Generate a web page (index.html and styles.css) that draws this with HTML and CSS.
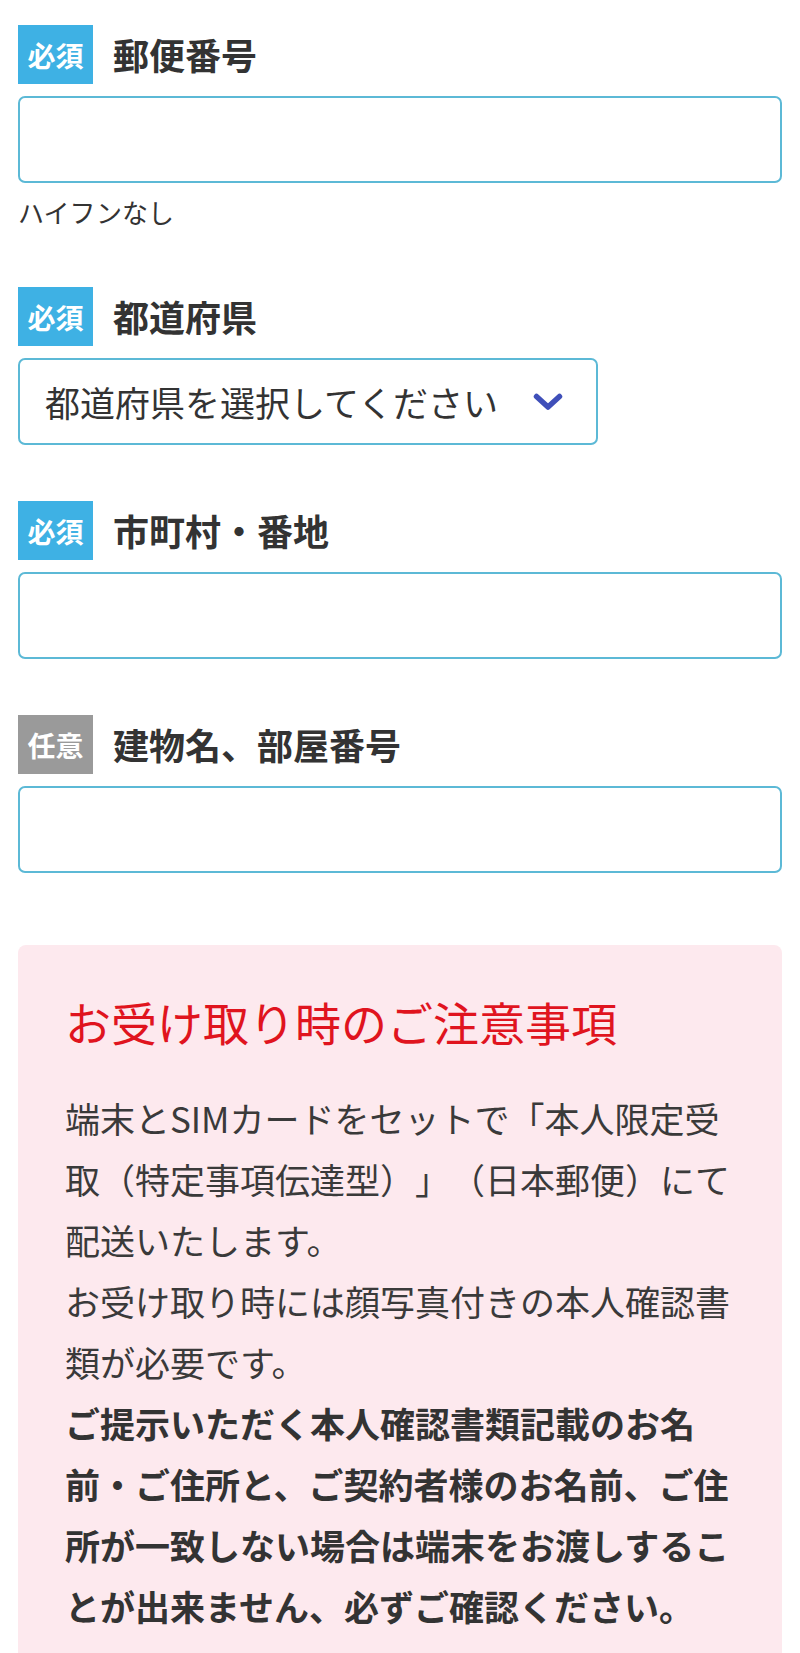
FILE: index.html
```html
<!DOCTYPE html>
<html lang="ja">
  <head>
    <meta charset="utf-8">
    <title>お届け先住所</title>
    <link rel="stylesheet" href="styles.css">
  </head>
  <body>
    <form class="address_form">
      <div class="field">
        <div class="field_head">
          <span class="badge">必須</span>
          <label class="field_label" for="zip">郵便番号</label>
        </div>
        <input class="text_input" type="text" id="zip" name="zip">
        <p class="hint">ハイフンなし</p>
      </div>

      <div class="field">
        <div class="field_head">
          <span class="badge">必須</span>
          <label class="field_label" for="pref">都道府県</label>
        </div>
        <div class="select_wrap">
          <select class="select_input" id="pref" name="pref">
            <option>都道府県を選択してください</option>
          </select>
          <svg class="select_arrow" width="30" height="18" viewBox="0 0 30 18">
            <path d="M3.5 3.5 L15 14 L26.5 3.5" fill="none" stroke="#3f4fb9" stroke-width="5.5" stroke-linecap="round" stroke-linejoin="round"/>
          </svg>
        </div>
      </div>

      <div class="field">
        <div class="field_head">
          <span class="badge">必須</span>
          <label class="field_label" for="city">市町村・番地</label>
        </div>
        <input class="text_input" type="text" id="city" name="city">
      </div>

      <div class="field">
        <div class="field_head">
          <span class="badge badge_optional">任意</span>
          <label class="field_label" for="building">建物名、部屋番号</label>
        </div>
        <input class="text_input" type="text" id="building" name="building">
      </div>
    </form>

    <div class="notice">
      <h2 class="notice_title">お受け取り時のご注意事項</h2>
      <p class="notice_text">端末とSIMカードをセットで「本人限定受取（特定事項伝達型）」（日本郵便）にて配送いたします。<br>お受け取り時には顔写真付きの本人確認書類が必要です。<br><strong>ご提示いただく本人確認書類記載のお名前・ご住所と、ご契約者様のお名前、ご住所が一致しない場合は端末をお渡しすることが出来ません、必ずご確認ください。</strong></p>
    </div>
  </body>
</html>
```

FILE: styles.css
```css
body {
  margin: 0;
  padding: 25px 18px 0;
  font-family: "Noto Sans CJK JP", "Noto Sans", sans-serif;
  color: #333;
  background: #fff;
  text-spacing-trim: space-all;
}

.address_form { margin: 0; }

.field + .field { margin-top: 56px; }

.field_head {
  display: flex;
  align-items: center;
  gap: 20px;
}

.badge {
  display: flex;
  align-items: center;
  justify-content: center;
  width: 75px;
  height: 59px;
  background: #3eb1e4;
  color: #fff;
  font-size: 28px;
  font-weight: bold;
  line-height: 1;
}
.badge_optional { background: #9a9a9a; }

.field_label {
  font-size: 36px;
  font-weight: bold;
  color: #333;
  line-height: 1.2;
}

.text_input {
  display: block;
  box-sizing: border-box;
  width: 100%;
  height: 87px;
  margin-top: 12px;
  border: 2px solid #5cb9d6;
  border-radius: 7px;
  background: #fff;
  font: inherit;
  font-size: 35px;
  padding: 0 24px;
}

.hint {
  margin: 10px 0 0;
  font-size: 26px;
  line-height: 38px;
  color: #333;
}

.select_wrap {
  position: relative;
  width: 580px;
  margin-top: 12px;
}

.select_input {
  display: block;
  box-sizing: border-box;
  width: 100%;
  height: 87px;
  border: 2px solid #5cb9d6;
  border-radius: 7px;
  background: #fff;
  color: #333;
  font-family: inherit;
  font-size: 35px;
  padding: 0 70px 0 25px;
  -webkit-appearance: none;
  appearance: none;
}

.select_arrow {
  position: absolute;
  top: 35px;
  right: 35px;
  pointer-events: none;
}

.notice {
  margin-top: 72px;
  padding: 42px 47px 40px;
  background: #fde9ee;
  border-radius: 8px;
}

.notice_title {
  margin: 0;
  font-size: 46px;
  line-height: 69px;
  font-weight: normal;
  color: #e0141e;
}

.notice_text {
  margin: 31px 0 0;
  font-size: 35px;
  line-height: 61px;
  color: #3a3a3a;
}
.notice_text strong { color: #333; }
```
